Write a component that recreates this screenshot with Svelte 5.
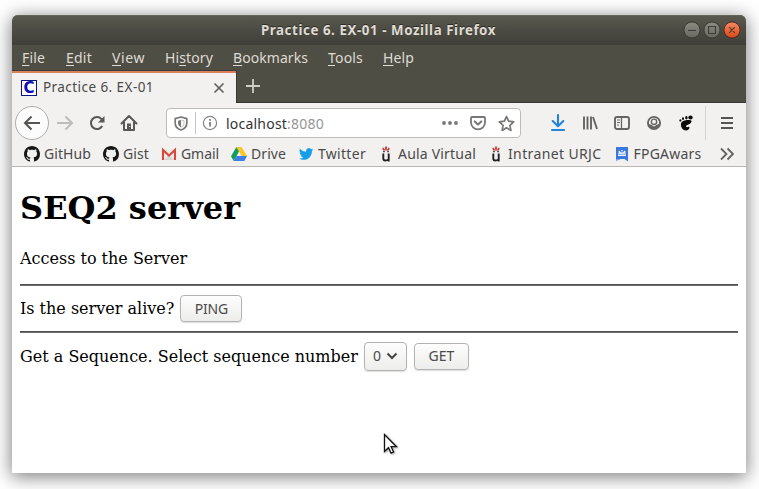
<script>
  const menus = [
    { pre: '', key: 'F', post: 'ile', w: 23, gap: 21 },
    { pre: '', key: 'E', post: 'dit', w: 26, gap: 20 },
    { pre: '', key: 'V', post: 'iew', w: 33, gap: 20 },
    { pre: 'Hi', key: 's', post: 'tory', w: 48, gap: 20 },
    { pre: '', key: 'B', post: 'ookmarks', w: 75, gap: 20 },
    { pre: '', key: 'T', post: 'ools', w: 35, gap: 20 },
    { pre: '', key: 'H', post: 'elp', w: 31, gap: 0 }
  ];
  const bookmarks = [
    { icon: 'github', label: 'GitHub', w: 47 },
    { icon: 'github', label: 'Gist', w: 26 },
    { icon: 'gmail', label: 'Gmail', w: 38 },
    { icon: 'drive', label: 'Drive', w: 35 },
    { icon: 'twitter', label: 'Twitter', w: 48 },
    { icon: 'urjc', label: 'Aula Virtual', w: 78 },
    { icon: 'urjc', label: 'Intranet URJC', w: 93.5 },
    { icon: 'fpga', label: 'FPGAwars', w: 68 }
  ];

  // Tracks the text of a label so that it fills the given width.
  function fit(node, width) {
    const natural = node.getBoundingClientRect().width;
    node.style.letterSpacing = (width - natural) / node.textContent.length + 'px';
  }
</script>

<div class="desktop">
  <div class="window">
    <header class="titlebar">
      <div class="title"><span use:fit={235}>Practice 6. EX-01 - Mozilla Firefox</span></div>
      <div class="controls">
        <svg width="60" height="20" viewBox="0 0 60 20">
          <defs>
            <linearGradient id="gr" x1="0" y1="0" x2="0" y2="1"><stop offset="0" stop-color="#8d8c83" /><stop offset="1" stop-color="#68675f" /></linearGradient>
            <linearGradient id="or" x1="0" y1="0" x2="0" y2="1"><stop offset="0" stop-color="#f38b67" /><stop offset=".6" stop-color="#e9602f" /><stop offset="1" stop-color="#d04a1f" /></linearGradient>
          </defs>
          <circle cx="10" cy="10" r="8.1" fill="url(#gr)" stroke="#383730" />
          <circle cx="30" cy="10" r="8.1" fill="url(#gr)" stroke="#383730" />
          <circle cx="50" cy="10" r="8.1" fill="url(#or)" stroke="#50291c" />
          <path d="M6 10.5h8M26.5 6.5h7v7h-7zM47.2 7.2l5.6 5.6M52.8 7.2l-5.6 5.6" fill="none" stroke="#3c3b37" stroke-width="1.1" />
        </svg>
      </div>
    </header>

    <nav class="menubar">
      {#each menus as m}
        <div class="menu" style:width="{m.w}px" style:margin-right="{m.gap}px"><span use:fit={m.w}>{m.pre}<u>{m.key}</u>{m.post}</span></div>
      {/each}
    </nav>

    <div class="tabs">
      <div class="tab">
        <div class="favicon">C</div>
        <div class="tabname"><span use:fit={111}>Practice 6. EX-01</span></div>
        <svg class="close" width="12" height="12" viewBox="0 0 12 12"><path d="M1.5 1.5l9 9M10.5 1.5l-9 9" stroke="#5c5c5a" stroke-width="1.6" /></svg>
      </div>
      <svg class="plus" width="14" height="14" viewBox="0 0 14 14"><path d="M7 0v14M0 7h14" stroke="#d0cec8" stroke-width="1.8" /></svg>
    </div>

    <div class="toolbar">
      <div class="back">
        <svg width="18" height="16" viewBox="0 0 18 16"><path d="M17 8H2M8.5 1.5L2 8l6.500 6.500" fill="none" stroke="#555553" stroke-width="2" /></svg>
      </div>
      <svg class="forward" width="18" height="16" viewBox="0 0 18 16"><path d="M1 8h15M9.500 1.500L16 8l-6.500 6.500" fill="none" stroke="#bcbcba" stroke-width="2" /></svg>
      <svg class="reload" width="16" height="16" viewBox="0 0 16 16"><path d="M13.200 11A6 6 0 1 1 12.500 4.100L14 5.600" fill="none" stroke="#585856" stroke-width="2" /><path d="M15.500 1v6.500H9z" fill="#585856" /></svg>
      <svg class="home" width="18" height="18" viewBox="0 0 18 18"><path d="M1.500 9.500L9 2l7.500 7.500M4 8v8h10V8" fill="none" stroke="#585856" stroke-width="2" stroke-linejoin="round" stroke-linecap="round" /><path d="M7 16V9.500h4V16z" fill="#585856" /><path d="M9.200 12h1v1h-1z" fill="#eee" /></svg>

      <div class="url">
        <svg class="shield" width="14" height="15" viewBox="0 0 14 15"><path d="M7 1L1.200 2.600V7c0 3.500 2.500 6 5.800 7 3.300-1 5.800-3.500 5.800-7V2.600z" fill="none" stroke="#777775" stroke-width="1.700" stroke-linejoin="round" /><path d="M7 4v7.300C5 10.300 4 9 4 7V4.800z" fill="#777775" /><path d="M7 4l3 .8V7c0 2-1 3.300-3 4.300" fill="none" stroke="#aaa" stroke-width=".7" /></svg>
        <i class="bar"></i>
        <svg class="info" width="16" height="16" viewBox="0 0 16 16"><circle cx="8" cy="8" r="6.600" fill="none" stroke="#858583" stroke-width="1.200" /><path d="M8 7v4.500M8 4v1.700" stroke="#777775" stroke-width="1.700" /></svg>
        <div class="address"><span use:fit={98}>localhost<em>:8080</em></span></div>
        <svg class="dots" width="16" height="4" viewBox="0 0 16 4"><path d="M2 2h0M8 2h0M14 2h0" stroke="#777775" stroke-width="3.800" stroke-linecap="round" /></svg>
        <svg class="pocket" width="16" height="16" viewBox="0 0 16 16"><path d="M2 2h12q1 0 1 1v4.500a7 6.800 0 0 1-14 0V3q0-1 1-1z" fill="none" stroke="#777775" stroke-width="1.800" /><path d="M4.700 6.400L8 9.500l3.300-3.100" fill="none" stroke="#777775" stroke-width="2" stroke-linecap="round" stroke-linejoin="round" /></svg>
        <svg class="star" width="17" height="17" viewBox="0 0 17 17"><path d="M8.500 1.500l2.100 4.700 5.100.6-3.800 3.500 1 5.100-4.400-2.600-4.400 2.600 1-5.100-3.800-3.500 5.100-.6z" fill="none" stroke="#777775" stroke-width="1.700" stroke-linejoin="round" /></svg>
      </div>

      <div class="tools">
        <svg width="16" height="18" viewBox="0 0 16 18"><path d="M8 1v11M2.700 7L8 12.300 13.300 7M2 16h12" fill="none" stroke="#2484d8" stroke-width="2.100" stroke-linejoin="round" stroke-linecap="round" /></svg>
        <svg width="16" height="16" viewBox="0 0 16 16"><path d="M2 1.500v13M5.500 1.500v13M9 1.500v13M11 2l4 12" fill="none" stroke="#646462" stroke-width="1.900" /></svg>
        <svg width="16" height="16" viewBox="0 0 16 16"><rect x="1" y="2" width="14" height="12" rx="2" fill="none" stroke="#646462" stroke-width="1.900" /><path d="M7.500 2v12" stroke="#646462" stroke-width="1.300" /><path d="M3 5h3M3 7.500h3M3 10h2" stroke="#646462" stroke-width="1" /></svg>
        <svg width="16" height="16" viewBox="0 0 16 16"><path fill-rule="evenodd" fill="#646462" d="M8 1a7 7 0 1 0 0 14A7 7 0 0 0 8 1zM3 8.800a5.100 5.100 0 1 1 10 0c-.6.5-1.500.9-2.500 1-.5.900-1.400 1.500-2.500 1.500s-2-.6-2.500-1.500c-1-.1-1.900-.5-2.500-1z" /><circle cx="8" cy="6.800" r="2.700" fill="#f2f1f0" stroke="#646462" stroke-width="1.400" /></svg>
        <svg width="16" height="16" viewBox="0 0 16 16"><g fill="#0b0b0b"><path d="M12.500 5.300C9.500 4.600 3 5.400 2.900 9.500 2.800 13 5.500 15.600 8.300 15.400c2.400-.2 3.700-2 3-3.300-.6-1-1.500.3-2.600 0-1.300-.5-.8-1.900 1.200-2.400 3.200-.9 4.900-3.900 2.600-4.400z" /><ellipse cx="12.500" cy="2.500" rx="2.200" ry="2" /><ellipse cx="8.400" cy="2.700" rx="1.200" ry="1.700" /><ellipse cx="5" cy="3.700" rx="1" ry="1.400" /><ellipse cx="2.400" cy="5.400" rx="1" ry="1.200" /></g></svg>
      </div>
      <i class="divider"></i>
      <svg class="burger" width="12" height="12" viewBox="0 0 12 12"><path d="M0 1h12M0 6h12M0 11h12" stroke="#555553" stroke-width="1.900" /></svg>
    </div>

    <div class="bookmarks">
      {#each bookmarks as b}
        <div class="bookmark">
          <svg width="16" height="16" viewBox="0 0 16 16">
            {#if b.icon === 'github'}
              <path fill="#171717" d="M8 0C3.580 0 0 3.580 0 8c0 3.540 2.290 6.530 5.470 7.590.4.070.55-.17.55-.38 0-.19-.01-.82-.01-1.490-2.010.37-2.530-.49-2.690-.94-.09-.23-.48-.94-.82-1.130-.28-.15-.68-.52-.01-.53.63-.01 1.080.58 1.230.82.72 1.210 1.870.87 2.330.66.07-.52.28-.87.51-1.070-1.780-.2-3.640-.89-3.640-3.950 0-.87.31-1.590.82-2.150-.08-.2-.36-1.020.08-2.120 0 0 .67-.21 2.200.82.64-.18 1.320-.27 2-.27s1.360.09 2 .27c1.530-1.040 2.200-.82 2.200-.82.44 1.100.16 1.920.08 2.120.51.560.82 1.270.82 2.150 0 3.070-1.870 3.750-3.650 3.950.29.25.54.73.54 1.480 0 1.070-.01 1.930-.01 2.200 0 .21.15.46.55.38A8 8 0 0 0 16 8c0-4.420-3.580-8-8-8z" />
            {:else if b.icon === 'gmail'}
              <path d="M1 3h14v11H1z" fill="#eeeae8" /><path d="M3 14l5-5 5 5z" fill="#d9d5d2" /><path d="M2 14V4l6 5.500L14 4v10" fill="none" stroke="#d54a3d" stroke-width="2.100" />
            {:else if b.icon === 'drive'}
              <path d="M5.400 1h5.200L16 10h-5.300z" fill="#fbc62d" /><path d="M5.400 1L8 5.500 2.700 15 0 10.300z" fill="#169c59" /><path d="M5.400 10H16l-2.700 5H2.700z" fill="#3f7de8" />
            {:else if b.icon === 'twitter'}
              <path fill="#189ee9" transform="translate(1 .8) scale(.6)" d="M23.900 4.600a10 10 0 0 1-2.800.8 4.900 4.900 0 0 0 2.100-2.700 10 10 0 0 1-3.100 1.200 4.900 4.900 0 0 0-8.400 4.500A14 14 0 0 1 1.600 3.200a4.900 4.900 0 0 0 1.500 6.500 5 5 0 0 1-2.200-.6v.1a4.900 4.900 0 0 0 3.900 4.800 5 5 0 0 1-2.200.1 4.900 4.900 0 0 0 4.600 3.400A9.900 9.900 0 0 1 0 19.500a14 14 0 0 0 7.500 2.200c9.100 0 14-7.500 14-14v-.6a10 10 0 0 0 2.400-2.500z" />
            {:else if b.icon === 'urjc'}
              <path d="M4.500 1.700h1.700v1.700H4.500zM7.100.5h1.800v2.500H7.100zM9.800 1.700h1.700v1.700H9.800zM5 3.300h6v1.200H5z" fill="#c33a3a" /><path d="M5.200 5.700h1.500M9.300 5.700h1.500" stroke="#222" stroke-width="1.300" /><path d="M5.300 7.500v5q0 2 2 2 1.700 0 3.200-1M10.700 7.500v8" fill="none" stroke="#222" stroke-width="1.900" />
            {:else}
              <path d="M2 1h12v14.500l-3.500-2.500H2z" fill="#3979dd" /><path d="M4 9.300h8" stroke="#fff" stroke-width="1.300" /><path d="M4.300 8.200V6.500L6 5.600l2 1 2-1 1.700.9v1.700z" fill="#d5e4fb" /><path d="M5.200 5.500h.1M8 4.800h.1M10.700 5.500h.1" stroke="#fff" stroke-width="1.500" stroke-linecap="round" /><path d="M2 13h5l-5 2z" fill="#72a2e8" />
            {/if}
          </svg>
          <div class="label" style:width="{b.w}px"><span use:fit={b.w}>{b.label}</span></div>
        </div>
      {/each}
      <svg class="more" width="14" height="14" viewBox="0 0 14 14"><path d="M1 1.500L6.500 7 1 12.500M7.500 1.500L13 7l-5.500 5.500" fill="none" stroke="#62625f" stroke-width="1.800" /></svg>
    </div>

    <main>
      <h1><span use:fit={220}>SEQ2 server</span></h1>
      <p>Access to the Server</p>
      <hr />
      <div class="row ping">Is the server alive?<button class="pingbtn"><span use:fit={33}>PING</span></button></div>
      <hr />
      <div class="row get">Get a Sequence. Select sequence number<button class="select"><span>0</span><svg width="12" height="8" viewBox="0 0 12 8"><path d="M1.500 1.500L6 6l4.500-4.500" fill="none" stroke="#444" stroke-width="2" /></svg></button><button class="getbtn"><span use:fit={26}>GET</span></button></div>
    </main>
  </div>
  <svg class="cursor" width="16" height="24" viewBox="0 0 16 24"><path d="M1.500 1.500v17l4-3.800 2.600 5.500 2.500-1.200-2.500-5.300h5.400z" fill="#fff" stroke="#111" stroke-width="1.300" /></svg>
</div>

<style>
  .desktop { width: 759px; height: 489px; box-sizing: border-box; padding: 15px 13px 16px 12px; background: #fff; overflow: hidden; position: relative; }
  .window { height: 458px; border-radius: 6px 6px 0 0; background: #fff; box-shadow: 0 3px 18px 1px rgba(0, 0, 0, .5); display: flex; flex-direction: column; font-family: "Noto Sans", "Open Sans", sans-serif; font-size: 14px; color: #4a4a49; white-space: nowrap; }
  svg { display: block; flex: none; }
  span { display: inline-block; }
  .titlebar { height: 30px; background: linear-gradient(#5a594f, #3f3e38); border-radius: 6px 6px 0 0; box-shadow: inset 0 1px #65645a; display: flex; align-items: center; }
  .title { width: 235px; margin-left: 249px; color: #dfdbd2; font-weight: 700; font-size: 13.300px; line-height: 30px; text-shadow: 0 -1px #2d2c28; }
  .controls { margin-left: 186px; }
  .menubar { height: 26px; background: #4f4e45; color: #dfdbd2; display: flex; padding-left: 10px; line-height: 26px; }
  .menu u { text-decoration-thickness: 1px; text-underline-offset: 2px; }
  .tabs { height: 32px; box-sizing: border-box; background: #4f4e45; display: flex; align-items: center; border-bottom: 1px solid #37362f; }
  .tab { width: 224px; height: 32px; align-self: flex-start; box-sizing: border-box; border-top: 2px solid #d9805f; background: #f2f1f0; display: flex; align-items: center; padding-left: 9px; box-shadow: 0 -1px #3c3b35, 1px 0 #37362f; }
  .favicon { width: 16px; height: 16px; box-sizing: border-box; border: 1px solid #0b1580; background: #fff; color: #0c0cb5; font: 700 15px/14px "DejaVu Sans", sans-serif; text-align: center; }
  .tabname { width: 110px; margin-left: 6px; font-size: 13.500px; line-height: 28px; padding-bottom: 2px; }
  .close { margin-left: 60px; }
  .plus { margin-left: 10px; margin-bottom: 1px; }
  .toolbar { height: 40px; background: #f2f1f0; display: flex; align-items: center; padding-left: 3px; }
  .back { width: 34px; height: 34px; box-sizing: border-box; border: 1px solid #adadab; border-radius: 50%; background: #fcfcfc; display: flex; align-items: center; justify-content: center; }
  .forward { margin-left: 7px; }
  .reload { margin-left: 15px; }
  .home { margin-left: 15px; }
  .url { width: 355px; height: 30px; box-sizing: border-box; margin-left: 28px; border: 1px solid #bdbcba; border-radius: 4px; background: #fff; display: flex; align-items: center; padding-left: 7px; }
  .bar { width: 1px; height: 22px; background: #c5c5c3; margin-left: 7px; }
  .info { margin-left: 6px; }
  .address { width: 98px; margin-left: 8px; color: #333; }
  .address em { font-style: normal; color: #969694; }
  .dots { margin-left: 118px; }
  .pocket { margin-left: 12px; }
  .star { margin-left: 12px; }
  .tools { display: flex; align-items: center; gap: 16px; margin-left: 29px; }
  .divider { width: 1px; height: 34px; background: #d5d4d2; margin-left: 11px; }
  .burger { margin-left: 15px; }
  .bookmarks { height: 24px; box-sizing: border-box; background: #f2f1f0; border-bottom: 1px solid #b9b8b6; display: flex; align-items: center; gap: 12px; padding: 0 0 1px 12px; }
  .bookmark { display: flex; align-items: center; gap: 4px; }
  .label { line-height: 20px; }
  .more { margin-left: 6px; }
  main { flex: 1; padding: 0 8px; font: 16px/19px "DejaVu Serif", serif; color: #000; }
  h1 { margin: 22px 0 0; font-size: 32px; line-height: 38px; width: 220px; }
  p { margin: 22px 0 16px; }
  hr { height: 2px; margin: 0; border: 0; background: linear-gradient(#4f4f4f 50%, #6e6e6e 50%); }
  .row { display: flex; align-items: center; height: 45px; }
  .get { height: 46px; }
  button { box-sizing: border-box; padding: 0; height: 27px; border: 1px solid #b4b3b1; border-radius: 4px; background: linear-gradient(#fdfdfd, #ededec); color: #4b4b4a; font: 14px/24px "Noto Sans", "Open Sans", sans-serif; display: flex; align-items: center; justify-content: center; box-shadow: 0 1px 1px #ddd; }
  .pingbtn { width: 62px; margin-left: 6px; }
  .select { width: 43px; height: 29px; margin-left: 6px; gap: 5px; }
  .getbtn { width: 55px; margin-left: 7px; }
  .cursor { position: absolute; left: 383px; top: 433px; filter: drop-shadow(1px 1px 1px #aaa); }
</style>
